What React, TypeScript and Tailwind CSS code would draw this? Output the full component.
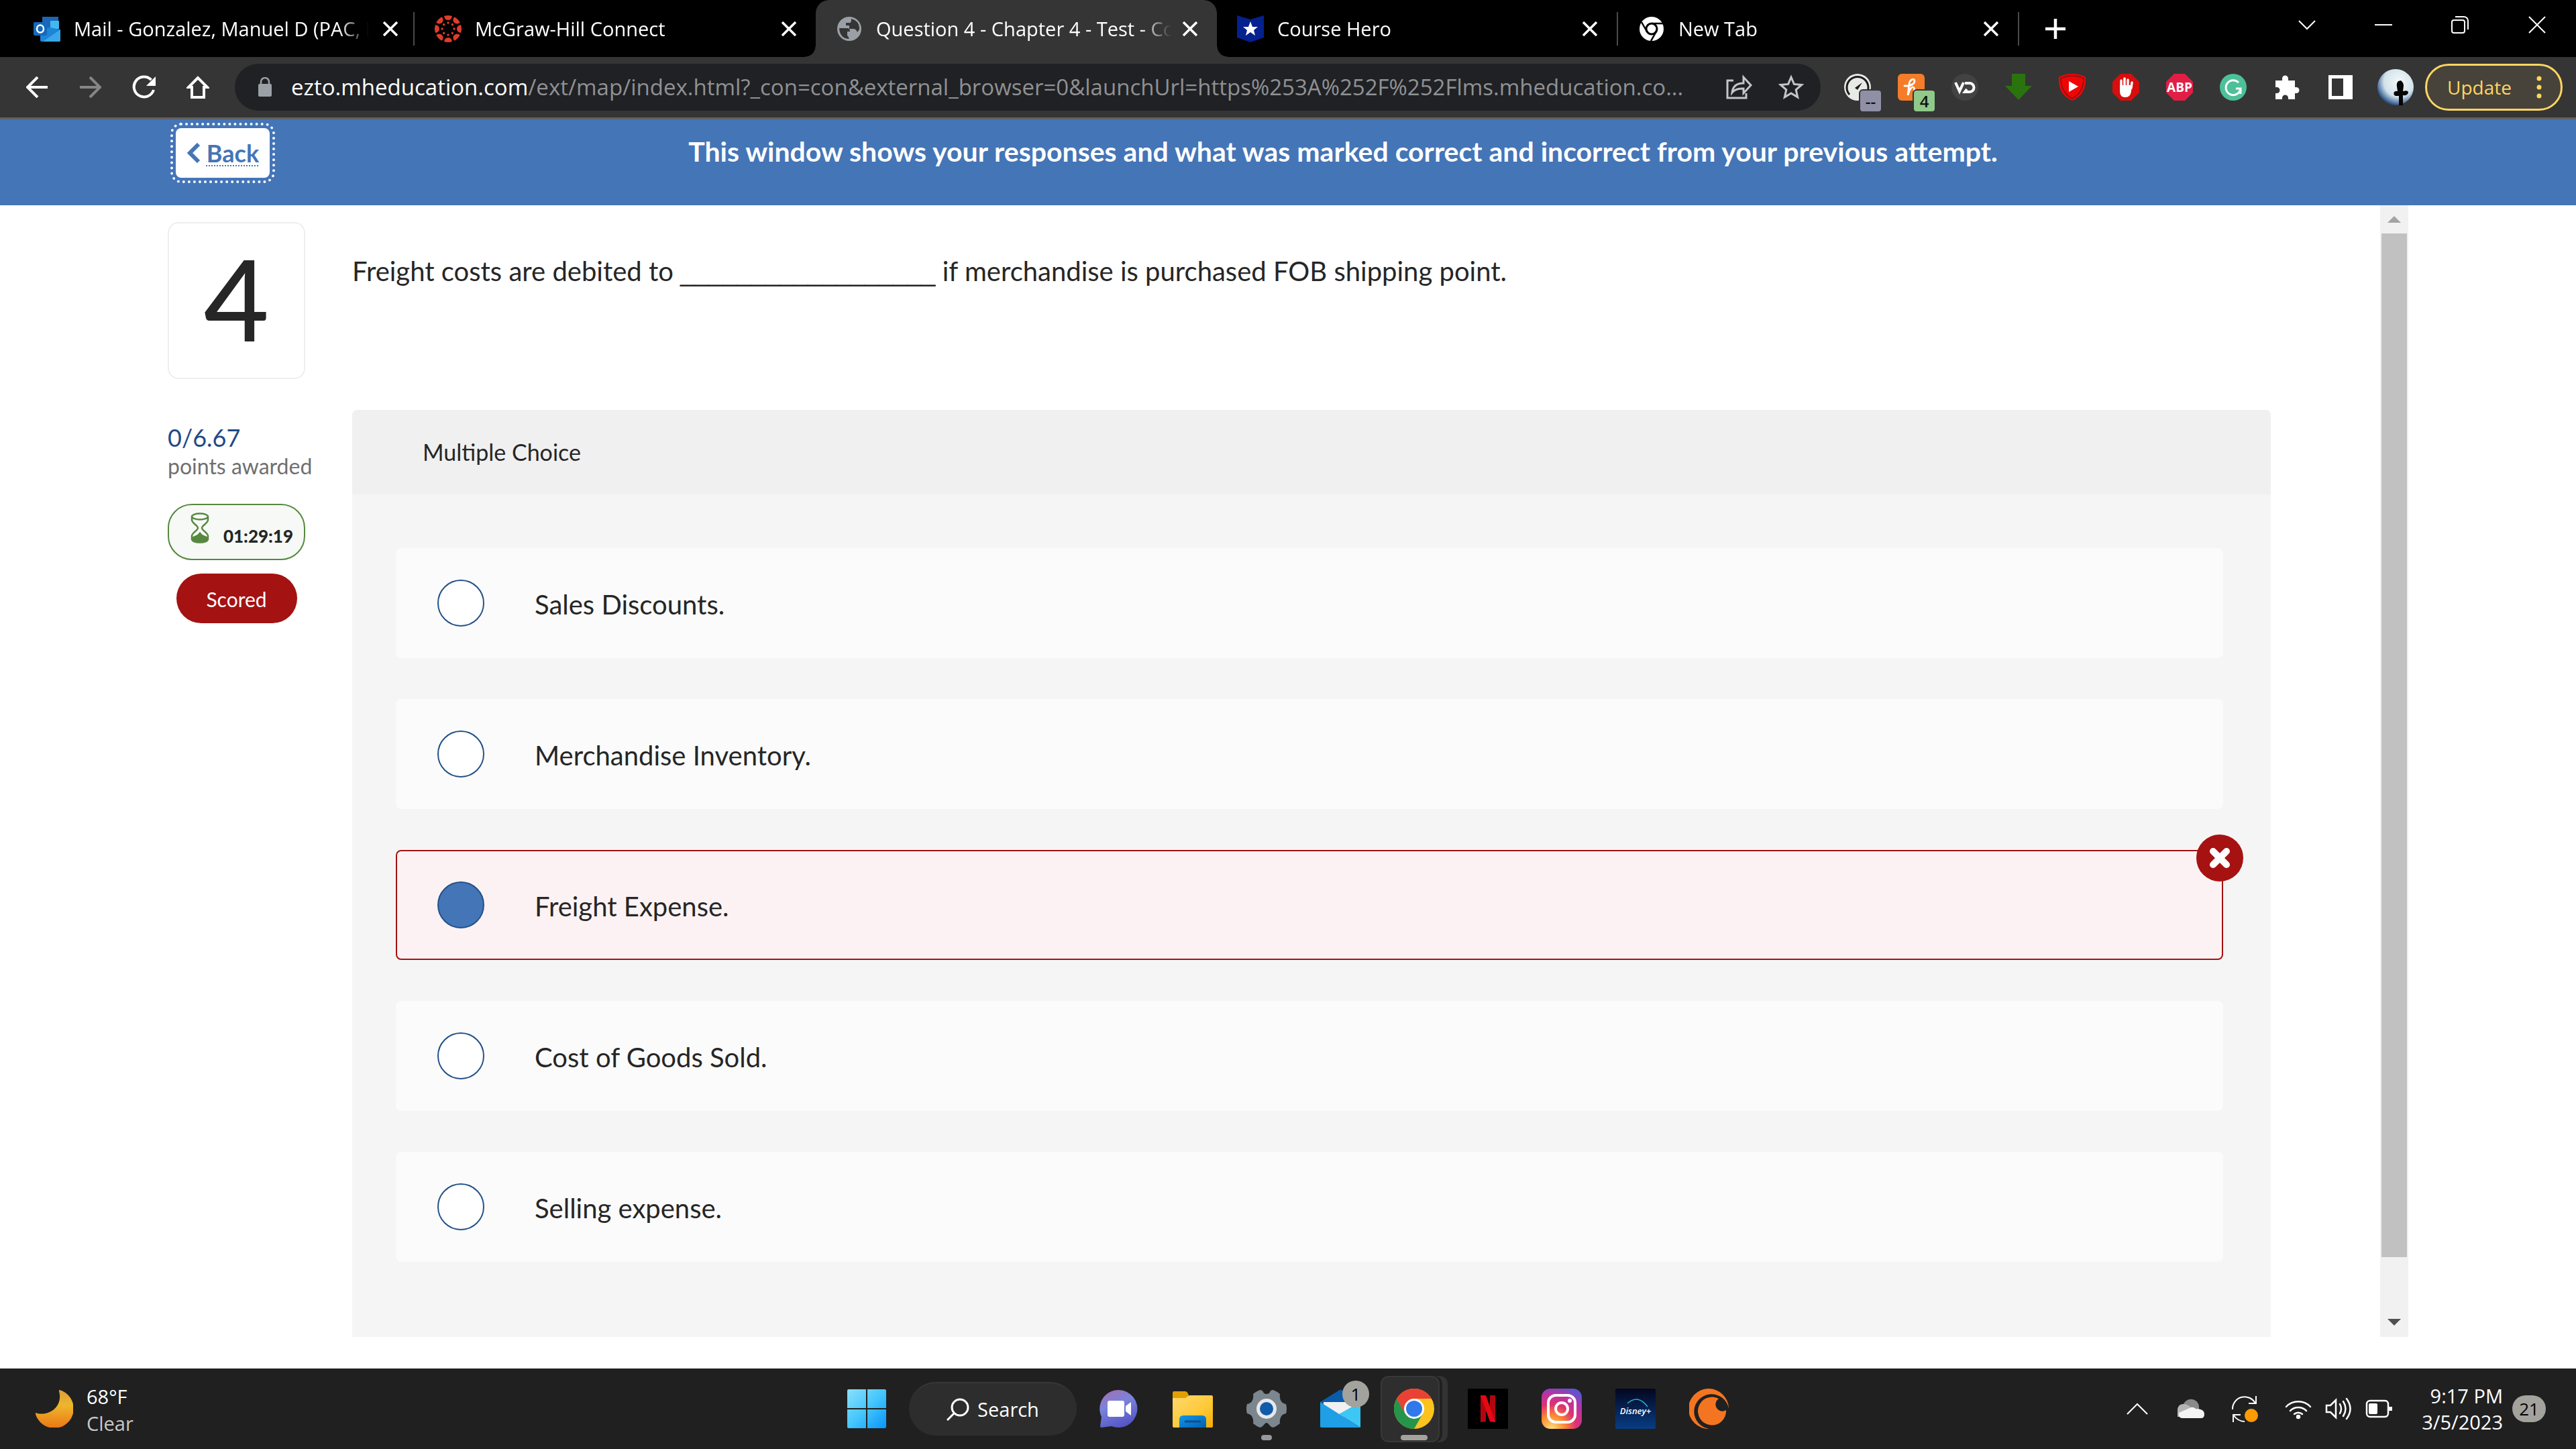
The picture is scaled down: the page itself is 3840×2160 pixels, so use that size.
import React from 'react';
import { clsx } from 'clsx';

const options = [
  { id: 'discounts', label: 'Sales Discounts.' },
  { id: 'inventory', label: 'Merchandise Inventory.' },
  { id: 'freight', label: 'Freight Expense.', wrong: true },
  { id: 'cogs', label: 'Cost of Goods Sold.' },
  { id: 'selling', label: 'Selling expense.' },
];

const tabs = [
  { title: 'Mail - Gonzalez, Manuel D (PAC, M', icon: <OutlookIcon /> },
  { title: 'McGraw-Hill Connect', icon: <CanvasIcon /> },
  { title: 'Question 4 - Chapter 4 - Test - Co', icon: <GlobeIcon />, active: true },
  { title: 'Course Hero', icon: <CourseHeroIcon /> },
  { title: 'New Tab', icon: <ChromeMonoIcon /> },
];

export default function App() {
  return (
    <div className="min-h-screen flex flex-col bg-white font-['Open_Sans','Noto_Sans',sans-serif]">
      <TabStrip />
      <Toolbar />
      <Banner />
      <main className="flex-1 flex pb-[47px] pr-[250px] font-[Lato,'Noto_Sans',sans-serif] text-[#262626]">
        <div className="flex-1 flex gap-[70px] pl-[250px] pr-[163px]">
          <Sidebar />
          <Question />
        </div>
        <Scrollbar />
      </main>
      <Taskbar />
    </div>
  );
}

function TabStrip() {
  return (
    <header className="h-[85px] bg-black flex items-center pl-5 text-white shrink-0">
      {tabs.map((tab, i) => (
        <Tab key={tab.title} title={tab.title} icon={tab.icon} active={tab.active} divider={!tab.active && i !== 1} />
      ))}
      <button aria-label="New tab" className="ml-9 w-9 h-9 flex items-center justify-center">
        <svg width="30" height="30" viewBox="0 0 30 30" stroke="#fff" strokeWidth="4.5"><path d="M15 0v30M0 15h30" /></svg>
      </button>
      <div className="ml-auto h-full flex items-center pb-3">
        <button aria-label="Search tabs" className="w-[114px] flex justify-center">
          <svg width="26" height="26" viewBox="0 0 26 26" fill="none" stroke="#fff" strokeWidth="2"><path d="M1 7l12 12L25 7" /></svg>
        </button>
        <button aria-label="Minimize" className="w-[114px] flex justify-center">
          <svg width="26" height="26" viewBox="0 0 26 26" stroke="#fff" strokeWidth="2"><path d="M0 13h26" /></svg>
        </button>
        <button aria-label="Restore" className="w-[114px] flex justify-center">
          <svg width="26" height="26" viewBox="0 0 26 26" fill="none" stroke="#fff" strokeWidth="2">
            <rect x="1" y="6" width="19" height="19" rx="3" />
            <path d="M6 1h13a6 6 0 0 1 6 6v13" />
          </svg>
        </button>
        <button aria-label="Close" className="w-[116px] flex justify-center">
          <svg width="26" height="26" viewBox="0 0 26 26" stroke="#fff" strokeWidth="2"><path d="M1 1l24 24M25 1L1 25" /></svg>
        </button>
      </div>
    </header>
  );
}

function Tab({ title, icon, active, divider }: { title: string; icon: React.ReactNode; active?: boolean; divider?: boolean }) {
  return (
    <div
      className={clsx(
        'relative w-[598px] flex items-center pl-[30px] pr-[29px]',
        active ? 'h-full bg-[#353535] rounded-t-[20px]' : 'h-[50px]',
        divider && 'border-r-2 border-[#4a4a4a]',
      )}
    >
      {active && (
        <>
          <span className="absolute bottom-0 -left-4 w-4 h-4 bg-[radial-gradient(circle_at_0_0,#000_15px,#353535_16px)]" />
          <span className="absolute bottom-0 -right-4 w-4 h-4 bg-[radial-gradient(circle_at_100%_0,#000_15px,#353535_16px)]" />
        </>
      )}
      <span className="w-10 h-10 shrink-0 flex items-center justify-center">{icon}</span>
      <span className="ml-5 flex-1 whitespace-nowrap text-[29px] leading-10 [mask-image:linear-gradient(to_right,#000_395px,transparent_440px)]">
        {title}
      </span>
      <button aria-label={`Close ${title}`} className="shrink-0">
        <svg width="22" height="22" viewBox="0 0 22 22" stroke="#fff" strokeWidth="3.5"><path d="M1 1l20 20M21 1L1 21" /></svg>
      </button>
    </div>
  );
}

function Toolbar() {
  return (
    <div className="h-[93px] bg-[#353535] border-b-[3px] border-[#606060] flex items-center pl-[35px] pr-5 shrink-0">
      <div className="flex gap-10">
        <button aria-label="Back" className="w-10 h-10 flex items-center justify-center">
          <svg width="32" height="32" viewBox="0 0 32 32" fill="none" stroke="#fff" strokeWidth="4"><path d="M32 16H3M17 1L2 16l15 15" /></svg>
        </button>
        <button aria-label="Forward" className="w-10 h-10 flex items-center justify-center">
          <svg width="32" height="32" viewBox="0 0 32 32" fill="none" stroke="#868686" strokeWidth="4"><path d="M0 16h29M15 1l15 15-15 15" /></svg>
        </button>
        <button aria-label="Reload" className="w-10 h-10 flex items-center justify-center">
          <svg width="36" height="36" viewBox="0 0 36 36" fill="none" stroke="#fff" strokeWidth="4">
            <path d="M32 22a15 15 0 1 1-3.500-15" />
            <path d="M35 2v14H21z" fill="#fff" stroke="none" />
          </svg>
        </button>
        <button aria-label="Home" className="w-10 h-10 flex items-center justify-center">
          <svg width="34" height="34" viewBox="0 0 34 34" fill="none" stroke="#fff" strokeWidth="4"><path d="M17 3L3 17h5v15h18V17h5z" /></svg>
        </button>
      </div>
      <div className="ml-[35px] mr-[35px] flex-1 min-w-0 h-[70px] rounded-full bg-[#202124] flex items-center pl-[34px] pr-6">
        <svg className="shrink-0" width="22" height="30" viewBox="0 0 22 30">
          <rect x="1" y="10" width="20" height="19" rx="2" fill="#9aa0a6" />
          <path d="M5 11V7a6 6 0 0 1 12 0v4" fill="none" stroke="#9aa0a6" strokeWidth="2.500" />
        </svg>
        <div className="ml-7 flex-1 whitespace-nowrap text-[33px] leading-10 text-[#8f9194]">
          <span className="text-white">ezto.mheducation.com</span>
          /ext/map/index.html?_con=con&amp;external_browser=0&amp;launchUrl=https%253A%252F%252Flms.mheducation.co...
        </div>
        <button aria-label="Share" className="w-10 h-10 mr-[38px]">
          <svg width="40" height="40" viewBox="0 0 40 40" fill="none" stroke="#c4c5c7" strokeWidth="3">
            <path d="M12 10H3v26h28v-7" />
            <path d="M10 28c1-9 7-14 17-14V5l11 12-11 12v-7c-8 0-13 1-17 6z" />
          </svg>
        </button>
        <button aria-label="Bookmark" className="w-10 h-10">
          <svg width="40" height="40" viewBox="0 0 40 40" fill="none" stroke="#c4c5c7" strokeWidth="3">
            <path d="M20 5l4.400 10.400 11.300 1-8.500 7.400 2.500 11L20 29l-9.700 5.800 2.500-11-8.500-7.400 11.300-1z" />
          </svg>
        </button>
      </div>
      <div className="flex gap-10 shrink-0">
        <ExtButton label="Speed" badge="--" badgeClass="bg-[#8f90a6]">
          <circle cx="20" cy="20" r="20" fill="#e8eae6" />
          <path d="M8 31a16 16 0 1 1 24 0" fill="none" stroke="#1c1c1c" strokeWidth="3" />
          <path d="M16 21l11-8-7 11z" fill="#1c1c1c" />
        </ExtButton>
        <ExtButton label="Honey" badge="4" badgeClass="bg-[#90c98a]">
          <rect width="40" height="40" rx="6" fill="#f57c28" />
          <path d="M10 18c8 1 15-3 15-7 0-5-7-3-8 4l-2 17c2-8 5-13 8-12 4 1-1 9 3 12" fill="none" stroke="#fff" strokeWidth="2.800" strokeLinecap="round" />
        </ExtButton>
        <ExtButton label="Video DownloadHelper">
          <circle cx="20" cy="20" r="20" fill="#434343" />
          <path d="M6 13l6 13 6-13M20 14h7a6 6 0 0 1 0 13h-7l3-4" fill="none" stroke="#fff" strokeWidth="4" />
        </ExtButton>
        <ExtButton label="Downloader">
          <path d="M10 0h20v18h10L20 39 0 18h10z" fill="#2b730f" />
        </ExtButton>
        <ExtButton label="Video blocker">
          <path d="M20 0q12 0 20 5c1 18-6 29-20 35C6 34-1 23 0 5q8-5 20-5z" fill="#f00505" />
          <path d="M20 3q10 0 17 4c0 15-6 24-17 30C9 31 3 22 3 7q7-4 17-4z" fill="none" stroke="#7c1414" strokeWidth="1.500" />
          <path d="M15 11v16l14-8z" fill="#fff" />
        </ExtButton>
        <ExtButton label="Content blocker">
          <path d="M12 0h16l12 12v16L28 40H12L0 28V12z" fill="#d80d0d" />
          <path d="M13 20V10M18 19V7M23 19V9M28 21l1-8" stroke="#fff" strokeWidth="3.500" strokeLinecap="round" />
          <path d="M11 17h18l-1 9q-1 9-9 9t-8-9z" fill="#fff" />
        </ExtButton>
        <ExtButton label="Adblock Plus">
          <path d="M12 0h16l12 12v16L28 40H12L0 28V12z" fill="#e01e46" />
          <text x="20" y="27" textAnchor="middle" fontSize="19" fontWeight="700" fill="#fff">ABP</text>
        </ExtButton>
        <ExtButton label="Grammarly">
          <circle cx="20" cy="20" r="20" fill="#4dc09a" />
          <path d="M28 13a11 11 0 1 0 3 9h-7M31 21v9" fill="none" stroke="#fff" strokeWidth="3" />
        </ExtButton>
        <ExtButton label="Extensions">
          <path d="M3 10h10V7a4.500 4.500 0 0 1 9 0v3h10v10h2a4.500 4.500 0 0 1 0 9h-2v9H22v-2a4.500 4.500 0 0 0-9 0v2H3v-9h2a4.500 4.500 0 0 0 0-9H3z" fill="#fff" />
        </ExtButton>
        <ExtButton label="Side panel">
          <path d="M2 2h36v36H2zM7 7v26h17V7z" fill="#fff" fillRule="evenodd" />
        </ExtButton>
      </div>
      <button aria-label="Profile" className="ml-[34px] w-14 h-14 shrink-0">
        <svg width="56" height="56" viewBox="0 0 56 56">
          <defs>
            <radialGradient id="moonlit" cx=".6" cy=".35" r=".7">
              <stop offset="0" stopColor="#f2fafb" />
              <stop offset=".6" stopColor="#d3e2ea" />
              <stop offset=".8" stopColor="#6c8db4" />
              <stop offset="1" stopColor="#12305c" />
            </radialGradient>
          </defs>
          <circle cx="28" cy="28" r="27" fill="url(#moonlit)" />
          <path d="M33 55V41h-5q-4-2-2-6 3-2 5-1l-1-7q-1-5 2-8l4-1q4 3 4 8l-1 8q8-2 8 2-1 5-8 4v15z" fill="#050505" />
        </svg>
      </button>
      <button className="ml-4 h-[70px] w-[205px] shrink-0 rounded-full border-[3px] border-[#fdd663] bg-[#47433a] text-[#fdd663] text-[28px] leading-10 flex items-center justify-between pl-[30px] pr-7">
        Update
        <svg width="8" height="34" viewBox="0 0 8 34" fill="#fdd663"><circle cx="4" cy="4" r="3.500" /><circle cx="4" cy="17" r="3.500" /><circle cx="4" cy="30" r="3.500" /></svg>
      </button>
    </div>
  );
}

function ExtButton({ label, badge, badgeClass, children }: { label: string; badge?: string; badgeClass?: string; children: React.ReactNode }) {
  return (
    <button aria-label={label} className="relative w-10 h-10">
      <svg width="40" height="40" viewBox="0 0 40 40">{children}</svg>
      {badge && (
        <span className={clsx('absolute left-[22px] top-[23px] w-[31px] h-[31px] rounded-[6px] border-2 border-[#353535] text-[#111] text-[24px] leading-[31px] font-semibold text-center box-content', badgeClass)}>
          {badge}
        </span>
      )}
    </button>
  );
}

function Banner() {
  return (
    <div className="h-32 bg-[#4475b7] flex items-start pl-[262px] pr-[238px] shrink-0 font-[Lato,'Noto_Sans',sans-serif]">
      <a href="#back" className="mt-[13px] w-[140px] h-[74px] rounded-lg bg-white outline-4 outline-dotted outline-white outline-offset-4 flex items-center justify-center gap-2 text-[#4475b7] text-[36px] leading-10 font-bold">
        <svg width="22" height="30" viewBox="0 0 22 30" fill="none" stroke="#4475b7" strokeWidth="6"><path d="M18 2L5 15l13 13" /></svg>
        <span className="underline decoration-dotted decoration-2 underline-offset-4">Back</span>
      </a>
      <p className="flex-1 mt-5 text-center text-white text-[41px] leading-[56px] font-bold">
        This window shows your responses and what was marked correct and incorrect from your previous attempt.
      </p>
    </div>
  );
}

function Sidebar() {
  return (
    <aside className="w-[205px] shrink-0 flex flex-col pt-[25px]">
      <div className="h-[234px] rounded-2xl border-2 border-[#eee] flex items-center justify-center pb-2 text-[168px] leading-none font-medium">4</div>
      <div className="mt-16 text-[36px] leading-[46px] text-[#1f4a86]">0/6.67</div>
      <div className="text-[32px] leading-10 text-[#6f6f6f] whitespace-nowrap">points awarded</div>
      <div className="mt-9 h-[84px] rounded-[36px] border-2 border-[#57883f] bg-[#f6f9f6] flex items-center justify-between pl-8 pr-4">
        <svg className="mb-3" width="28" height="46" viewBox="0 0 28 46" fill="none" stroke="#57883f" strokeWidth="2.500">
          <ellipse cx="14" cy="6" rx="12" ry="4.500" />
          <path d="M2 6v5c0 5 9 8 9 12S2 30 2 35v5c2 6 22 6 24 0v-5c0-5-9-8-9-12s9-7 9-12V6" />
          <path d="M3 38c3-3 8-2 11-7 3 5 8 4 11 7v3c-4 4-18 4-22 0z" fill="#57883f" />
        </svg>
        <span className="pt-3 text-[26px] leading-8 font-black">01:29:19</span>
      </div>
      <div className="mt-5 self-center w-[180px] h-[74px] rounded-full bg-[#a41212] text-white text-[30px] leading-[76px] text-center">Scored</div>
    </aside>
  );
}

function Question() {
  return (
    <section className="flex-1 min-w-0 flex flex-col">
      <p className="h-[305px] pt-[70px] text-[40px] leading-[56px]">
        Freight costs are debited to{' '}
        <span className="font-['Liberation_Sans',sans-serif] text-[38px]">__________________</span>
        {' '}if merchandise is purchased FOB shipping point.
      </p>
      <fieldset className="flex-1 rounded-t-lg bg-[#f5f5f5]">
        <div className="h-[126px] rounded-t-lg bg-[#f0f0f0] pl-[105px] flex items-center text-[34px] leading-10">Multiple Choice</div>
        <div className="pt-20 pl-[65px] pr-[71px] flex flex-col gap-[61px]">
          {options.map(option => (
            <label
              key={option.id}
              htmlFor={option.id}
              className={clsx(
                'relative h-[164px] rounded-lg border-2 flex items-center pl-[60px] text-[40px] leading-[56px]',
                option.wrong ? 'border-[#a61212] bg-[#fdf2f3]' : 'border-transparent bg-[#fbfbfb]',
              )}
            >
              <input
                type="radio"
                id={option.id}
                name="answer"
                defaultChecked={option.wrong}
                className="appearance-none w-[70px] h-[70px] rounded-full border-2 border-[#235189] bg-white checked:bg-[#4475b7]"
              />
              <span className="ml-[75px] pt-1">{option.label}</span>
              {option.wrong && (
                <span className="absolute -top-[25px] -right-8 w-[70px] h-[70px] rounded-full bg-[#a61212] flex items-center justify-center">
                  <svg width="32" height="32" viewBox="0 0 32 32" stroke="#fff" strokeWidth="10" strokeLinecap="round"><path d="M6 6l20 20M26 6L6 26" /></svg>
                </span>
              )}
            </label>
          ))}
        </div>
      </fieldset>
    </section>
  );
}

function Scrollbar() {
  return (
    <div className="w-[42px] shrink-0 bg-[#f1f1f1] flex flex-col items-center">
      <svg className="shrink-0" width="42" height="42" viewBox="0 0 42 42"><path d="M11 26l10-10 10 10z" fill="#a3a3a3" /></svg>
      <div className="flex-1 w-[38px] bg-[#c1c1c1]" />
      <div className="h-[119px] flex items-end">
        <svg width="42" height="42" viewBox="0 0 42 42"><path d="M11 15l10 10 10-10z" fill="#505050" /></svg>
      </div>
    </div>
  );
}

function Taskbar() {
  return (
    <footer className="h-[120px] bg-[#202020] text-white grid grid-cols-[1fr_auto_1fr] items-center shrink-0">
      <div className="flex items-center gap-5 pl-[53px]">
        <svg width="56" height="56" viewBox="0 0 56 56">
          <defs>
            <linearGradient id="moon" x2="0" y2="1">
              <stop offset="0" stopColor="#d9a03c" />
              <stop offset=".4" stopColor="#eeb62c" />
              <stop offset="1" stopColor="#ec7615" />
            </linearGradient>
          </defs>
          <path d="M36 0a29 29 0 1 1-36 36c-1-2 1-2 3-1 20 4 38-12 32-33 0-2 0-2 1-2z" fill="url(#moon)" />
        </svg>
        <div className="pt-[3px] text-[29px] leading-10">
          <div>68°F</div>
          <div className="text-[#c8c8c8]">Clear</div>
        </div>
      </div>

      <div className="flex items-center">
        <TaskButton label="Start">
          <defs>
            <linearGradient id="win" x2="1" y2="1">
              <stop offset="0" stopColor="#8be0fb" />
              <stop offset=".5" stopColor="#45c6fd" />
              <stop offset="1" stopColor="#0a94fb" />
            </linearGradient>
          </defs>
          <path d="M3 1h26v28H1V3q0-2 2-2zM31 1h26q2 0 2 2v26H31zM1 31h28v28H3q-2 0-2-2zM31 31h28v26q0 2-2 2H31z" fill="url(#win)" />
        </TaskButton>
        <button className="mx-2 w-[250px] h-20 rounded-full bg-[#2d2d2d] border-t-2 border-[#373737] flex items-center justify-center gap-3 text-[29px] leading-10">
          <svg width="34" height="34" viewBox="0 0 34 34" fill="none" stroke="#fff" strokeWidth="3"><circle cx="20" cy="14" r="12" /><path d="M12 22L1 33" /></svg>
          Search
        </button>
        <TaskButton label="Chat">
          <defs>
            <linearGradient id="chat" x1=".2" x2=".6" y2="1">
              <stop offset="0" stopColor="#a071b4" />
              <stop offset=".4" stopColor="#7a83dc" />
              <stop offset="1" stopColor="#5354c4" />
            </linearGradient>
          </defs>
          <path d="M30 2a28 28 0 1 1-11 54L4 58q-2 0-2-2l2-14A28 28 0 0 1 30 2z" fill="url(#chat)" />
          <rect x="13" y="18" width="25" height="24" rx="3" fill="#fff" />
          <path d="M40 26l8-6v20l-8-6z" fill="#fff" />
        </TaskButton>
        <TaskButton label="File Explorer">
          <defs>
            <linearGradient id="folder" x2="1" y2="1">
              <stop offset="0" stopColor="#ffd96f" />
              <stop offset=".6" stopColor="#ffc937" />
              <stop offset="1" stopColor="#f2ac00" />
            </linearGradient>
            <linearGradient id="pocket" x2="1" y2="1">
              <stop offset="0" stopColor="#1397e8" />
              <stop offset="1" stopColor="#0060b4" />
            </linearGradient>
          </defs>
          <path d="M0 6q0-2 2-2h17q3 0 5 6v8H0z" fill="#e2a000" />
          <path d="M0 14h19l6-4h33q2 0 2 2v44q0 2-2 2H2q-2 0-2-2z" fill="url(#folder)" />
          <path d="M10 58V46q0-6 6-6h28q6 0 6 6v12z" fill="url(#pocket)" />
          <path d="M18 49h24" stroke="#114a8b" strokeWidth="3" />
        </TaskButton>
        <TaskButton label="Settings" dot>
          <path d="M20 2q4 0 5 3t5 3 5-3 5-3q5 2 10 6-1 7 2 11 2 3 7 4 2 7 0 14-5 1-7 4-3 5-2 11-5 4-10 6-4-1-6-4t-4-3-4 3-6 4q-5-2-10-6 1-6-2-11-2-3-7-4-2-7 0-14 5-1 7-4 3-4 2-11 5-4 10-6z" fill="#7b868f" />
          <circle cx="30" cy="30" r="15" fill="#e8e8e8" />
          <circle cx="30" cy="30" r="10" fill="#0e5cab" />
        </TaskButton>
        <TaskButton label="Mail" badge="1">
          <path d="M0 20L29 2q2-1 3 0l28 18v18H0z" fill="#0a5cab" />
          <path d="M5 20h50v16L30 44 5 30z" fill="#f0f0f0" />
          <path d="M60 20v38L28 38z" fill="#3cc7f4" />
          <path d="M0 20l60 38H2q-2 0-2-2z" fill="#1f9fe6" />
        </TaskButton>
        <TaskButton label="Google Chrome" open>
          <circle cx="30" cy="30" r="30" fill="#fcc31e" />
          <path d="M4 15a30 30 0 0 1 52 0H30L17 37z" fill="#e94235" />
          <path d="M4 15a30 30 0 0 0 26 45l13-23H17z" fill="#26954a" />
          <path d="M4 15l13 23 6-15 7-8z" fill="#e94235" />
          <circle cx="30" cy="30" r="15" fill="#fff" />
          <circle cx="30" cy="30" r="12" fill="#3079ea" />
        </TaskButton>
        <TaskButton label="Netflix">
          <rect width="60" height="60" fill="#000" />
          <path d="M19 10h8v39l-8 1zM33 10h8v40l-8-1z" fill="#b1060f" />
          <path d="M19 10h8l14 40-8-1z" fill="#e50914" />
        </TaskButton>
        <TaskButton label="Instagram">
          <defs>
            <radialGradient id="insta" cx=".25" cy="1" r="1.100">
              <stop offset="0" stopColor="#fee07c" />
              <stop offset=".3" stopColor="#fc8a32" />
              <stop offset=".55" stopColor="#e03270" />
              <stop offset=".8" stopColor="#b832a5" />
              <stop offset="1" stopColor="#5a55d0" />
            </radialGradient>
          </defs>
          <rect width="60" height="60" rx="13" fill="url(#insta)" />
          <rect x="10" y="10" width="40" height="40" rx="11" fill="none" stroke="#fff" strokeWidth="4" />
          <circle cx="30" cy="30" r="9" fill="none" stroke="#fff" strokeWidth="4" />
          <circle cx="42" cy="18" r="3" fill="#fff" />
        </TaskButton>
        <TaskButton label="Disney+">
          <defs>
            <linearGradient id="disney" x2="0" y2="1">
              <stop offset="0" stopColor="#04061f" />
              <stop offset="1" stopColor="#083d84" />
            </linearGradient>
          </defs>
          <rect width="60" height="60" rx="2" fill="url(#disney)" />
          <path d="M18 22q16-14 30 5" fill="none" stroke="#20b4d8" strokeWidth="1.500" />
          <text x="30" y="38" textAnchor="middle" fontSize="13" fontStyle="italic" fontWeight="600" fill="#fff">Disney+</text>
        </TaskButton>
        <TaskButton label="Crunchyroll">
          <path d="M30 60A30 30 0 1 1 59 30 26 26 0 1 0 30 60z" fill="#f47521" />
          <path d="M44 15a21 21 0 1 0 11 17 10 10 0 1 1-11-17z" fill="#f47521" />
        </TaskButton>
      </div>

      <div className="flex items-center justify-end pr-[45px]">
        <button aria-label="Show hidden icons" className="mr-11">
          <svg width="32" height="18" viewBox="0 0 32 18" fill="none" stroke="#fff" strokeWidth="2"><path d="M1 17L16 2l15 15" /></svg>
        </button>
        <svg className="mr-10" width="40" height="40" viewBox="0 0 40 40">
          <path d="M8 20a12 12 0 0 1 24-4v8H8z" fill="#8a8a8a" />
          <path d="M0 32V20q2-8 10-7 9 1 12 9v10z" fill="#b5b5b5" />
          <path d="M2 26l18-8q4-1 7 2 13 0 13 8 0 6-5 6H7q-6 0-5-8z" fill="#f4f4f4" />
        </svg>
        <svg className="mr-10" width="40" height="42" viewBox="0 0 40 42" fill="none" stroke="#fff" strokeWidth="2">
          <path d="M2 22A18 18 0 0 1 36 13M37 2v11H26M3 41V30h11M3 30q7 10 17 10" />
          <circle cx="30" cy="31" r="10" fill="#ff9b05" stroke="none" />
        </svg>
        <button aria-label="Network, volume and battery" className="mr-11 flex gap-5">
          <svg width="40" height="34" viewBox="0 0 40 34" fill="none" stroke="#fff" strokeWidth="2.500" strokeLinecap="round">
            <path d="M2 14a25 25 0 0 1 36 0M8 20a17 17 0 0 1 24 0M14 25a9 9 0 0 1 12 0" />
            <circle cx="20" cy="29" r="2" fill="#fff" />
          </svg>
          <svg width="40" height="34" viewBox="0 0 40 34" fill="none" stroke="#fff" strokeWidth="2.500" strokeLinecap="round">
            <path d="M2 12h6l8-8v26l-8-8H2zM22 10q4 7 0 14M27 6q7 11 0 22M32 2q11 15 0 30" />
          </svg>
          <svg width="40" height="34" viewBox="0 0 40 34" fill="none" stroke="#fff" strokeWidth="2.500">
            <rect x="2" y="5" width="32" height="24" rx="5" />
            <rect x="5" y="9" width="13" height="16" rx="2" fill="#fff" stroke="none" />
            <path d="M37 14v6" strokeWidth="6" />
          </svg>
        </button>
        <button className="flex items-center gap-[14px]">
          <span className="text-right text-[29px] leading-[39px]">
            9:17 PM
            <br />
            3/5/2023
          </span>
          <span className="w-[50px] h-10 rounded-full bg-[#a3a29d] text-black text-[26px] leading-10 text-center">21</span>
        </button>
      </div>
    </footer>
  );
}

function TaskButton({ label, badge, dot, open, children }: { label: string; badge?: string; dot?: boolean; open?: boolean; children: React.ReactNode }) {
  return (
    <button aria-label={label} className="relative w-[110px] h-[120px] flex items-center justify-center">
      {open && (
        <>
          <span className="absolute left-5 top-[11px] w-[85px] h-[99px] rounded-xl bg-[#333]" />
          <span className="absolute left-[5px] top-[11px] w-[92px] h-[99px] rounded-xl bg-[#202020]" />
          <span className="absolute left-[5px] top-[11px] w-[88px] h-[99px] rounded-xl border-2 border-[#383838] bg-[#2e2e2e]" />
          <span className="absolute left-[35px] bottom-[13px] w-10 h-2 rounded-full bg-[#a3a29d]" />
        </>
      )}
      <svg className="relative" width="60" height="60" viewBox="0 0 60 60">{children}</svg>
      {dot && <span className="absolute bottom-[13px] w-4 h-2 rounded-full bg-[#999]" />}
      {badge && <span className="absolute left-[58px] top-[18px] w-10 h-10 rounded-full bg-[#a3a29d] text-black text-[26px] leading-10">{badge}</span>}
    </button>
  );
}

function OutlookIcon() {
  return (
    <svg width="40" height="40" viewBox="0 0 40 40">
      <path d="M13 2h24v18H13z" fill="#1c66b5" />
      <path d="M25 8h13v12H25z" fill="#41b9f0" />
      <path d="M10 20l15-2 15 3v16q0 2-2 2H12q-2 0-2-2z" fill="#1d85d6" />
      <path d="M40 21v16q0 2-2 2H14z" fill="#3aa7ea" />
      <rect y="10" width="20" height="20" rx="2" fill="#1569bd" />
      <ellipse cx="10" cy="20" rx="5" ry="5.500" fill="none" stroke="#fff" strokeWidth="2.500" />
    </svg>
  );
}

function CanvasIcon() {
  return (
    <svg width="40" height="40" viewBox="0 0 40 40" fill="#e03c2b">
      {[0, 45, 90, 135, 180, 225, 270, 315].map(angle => (
        <g key={angle} transform={`rotate(${angle} 20 20)`}>
          <path d="M14 1q6-2 12 0-1 6-6 6t-6-6z" />
          <circle cx="20" cy="11" r="1.700" />
        </g>
      ))}
    </svg>
  );
}

function GlobeIcon() {
  return (
    <svg width="36" height="36" viewBox="0 0 36 36">
      <circle cx="18" cy="18" r="18" fill="#9aa0a6" />
      <path d="M3 17h12q4 0 4 5h-4v6q4 4 2 5Q4 32 3 17zM21 3q13 3 12 16l-3 4q-2-5-6-5h-6v-5h-5V9h6q2 0 2-6z" fill="#353535" />
    </svg>
  );
}

function CourseHeroIcon() {
  return (
    <svg width="40" height="40" viewBox="0 0 40 40">
      <path d="M0 0l20 6L40 0v33l-20 7-20-7z" fill="#04218f" />
      <path d="M20 9l3 8h8l-6 5 2 8-7-5-7 5 2-8-6-5h8z" fill="#fff" />
    </svg>
  );
}

function ChromeMonoIcon() {
  return (
    <svg width="36" height="36" viewBox="0 0 36 36">
      <circle cx="18" cy="18" r="18" fill="#fff" />
      <path d="M18 10h17M11 22L3 8M25 22l-8 14" stroke="#000" strokeWidth="2.500" />
      <circle cx="18" cy="18" r="8" fill="#fff" stroke="#000" strokeWidth="3" />
    </svg>
  );
}
